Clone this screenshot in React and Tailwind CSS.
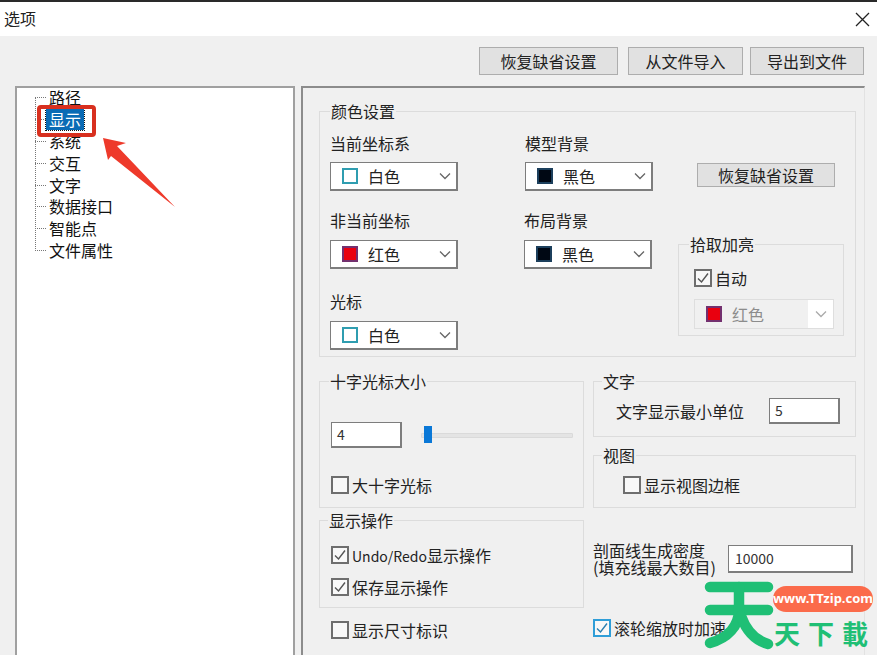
const FONT = '[font-family:"Noto_Sans_CJK_SC","Noto_Sans",sans-serif]';

function Btn({ children, className = "" }) {
  return (
    <button className={`flex items-center justify-center bg-[#e1e1e1] border border-[#adadad] text-[16px] text-[#222] ${className}`}>
      {children}
    </button>
  );
}

function Chevron({ color = "#666" }) {
  return (
    <svg width="12" height="8" viewBox="0 0 12 8" className="shrink-0">
      <path d="M1 1.5 L6 6.5 L11 1.5" fill="none" stroke={color} strokeWidth="1.3" />
    </svg>
  );
}

function Swatch({ kind }) {
  const cls =
    kind === "white"
      ? "bg-white border-[#2f9db0]"
      : kind === "black"
      ? "bg-[#000814] border-[#1c3f5c]"
      : "bg-[#e9000f] border-[#73306f]";
  return <span className={`block w-[16px] h-[16px] border-2 shrink-0 ${cls}`} />;
}

function Select({ kind, label }) {
  return (
    <div className="flex items-center w-[128px] h-[29px] bg-white border border-[#7d7d7d] border-b-2 border-r-2 pl-[11px] pr-[5px]">
      <Swatch kind={kind} />
      <span className="ml-[10px] flex-1 text-[16px] leading-[24px] text-[#222]">{label}</span>
      <Chevron />
    </div>
  );
}

function Group({ title, legendClass = "ml-[10px]", className = "", children }) {
  return (
    <fieldset className={`border border-[#dcdcdc] ${className}`}>
      <legend className={`px-[1px] text-[16px] leading-[24px] text-[#222] ${legendClass}`}>{title}</legend>
      {children}
    </fieldset>
  );
}

function Check({ checked, label, blue, className = "", textClass = "" }) {
  return (
    <label className={`flex items-center h-[18px] ${className}`}>
      <span
        className={`flex items-center justify-center w-[18px] h-[18px] shrink-0 border-2 bg-[#f8f8f8] ${
          blue ? "border-[#2f9ed8]" : "border-[#6e6e6e]"
        }`}
      >
        {checked && (
          <svg width="14" height="14" viewBox="0 0 14 14">
            <path d="M2 7.5 L5.5 11 L12 2.5" fill="none" stroke={blue ? "#2a7fb0" : "#555"} strokeWidth="1.4" />
          </svg>
        )}
      </span>
      <span className={`ml-[3px] whitespace-nowrap text-[16px] leading-[24px] text-[#222] ${textClass}`}>{label}</span>
    </label>
  );
}

function Field({ value, className = "" }) {
  return (
    <div className={`flex items-center bg-white border border-[#7d7d7d] border-b-2 border-r-2 pl-[5px] text-[14px] text-[#333] ${className}`}>
      {value}
    </div>
  );
}

const treeItems = ["路径", "显示", "系统", "交互", "文字", "数据接口", "智能点", "文件属性"];

function Tree() {
  return (
    <div className="relative w-[280px] shrink-0 h-[600px] bg-white border-2 border-b-0 border-[#a0a0a0]">
      <div className="relative -mt-[1px] pl-[18px]">
        <span className="absolute left-[18px] top-[11px] h-[153px] border-l border-dotted border-[#777]" />
        {treeItems.map((t, i) => (
          <div key={t} className="flex items-center h-[21.8px]">
            <span className="w-[11px] border-t border-dotted border-[#777] shrink-0" />
            <span
              className={`px-[3px] text-[16px] leading-[21px] ${
                i === 1 ? "bg-[#0a6bb5] text-white outline-1 outline-dotted outline-[#111]" : "text-[#111]"
              }`}
            >
              {t}
            </span>
          </div>
        ))}
      </div>
      {/* annotation: red highlight and arrow */}
      <span className="absolute left-[20px] top-[17px] w-[59px] h-[32px] border-[4px] border-[#d8301f] rounded-[4px]" />
      <svg className="absolute left-[70px] top-[40px]" width="120" height="90" viewBox="0 0 120 90">
        <polygon points="16,10 39,15 30,18 88,79 24,28 21,32" fill="#ee3a2b" />
      </svg>
    </div>
  );
}

function Logo() {
  return (
    <div className="absolute left-[700px] top-[580px] w-[177px] h-[75px]">
      <svg className="absolute left-0 top-0" width="80" height="75" viewBox="0 0 80 75">
        <g fill="none" stroke="#1fbf75" strokeWidth="10.5" strokeLinecap="round" strokeLinejoin="round">
          <path d="M10 7 H68" />
          <path d="M10 30 H68" />
          <path d="M39 7 V30 C39 46 28 58 10 63" />
          <path d="M41 36 C46 50 54 60 68 64" />
        </g>
      </svg>
      <div className="absolute left-[73px] top-[6px] w-[100px] h-[26px] rounded-full bg-[#fb6b4b] flex items-center justify-center text-white text-[13px] font-bold font-['Noto_Sans',sans-serif] whitespace-nowrap">
        www.TTzip.com
      </div>
      <div className="absolute left-[74px] top-[36px] whitespace-nowrap text-[#1fbf75] text-[26px] leading-[34px] font-bold tracking-[8px]">
        天下載
      </div>
    </div>
  );
}

const LABEL = "text-[16px] leading-[24px] text-[#222]";

export default function App() {
  return (
    <div className={`relative w-[877px] h-[655px] overflow-hidden flex flex-col bg-[#f0f0f0] ${FONT}`}>
      <header className="flex items-center justify-between h-[36px] shrink-0 bg-white border-t-2 border-[#2a2a2a] pl-[4px] pr-[7px]">
        <span className="text-[16px] text-[#222] -mt-[2px]">选项</span>
        <svg width="15" height="15" viewBox="0 0 15 15">
          <path d="M1 1 L14 14 M14 1 L1 14" stroke="#222" strokeWidth="1.3" />
        </svg>
      </header>

      <div className="flex justify-end pt-[11px] pr-[13px] shrink-0">
        <Btn className="w-[139px] h-[28px]">恢复缺省设置</Btn>
        <Btn className="w-[115px] h-[28px] ml-[10px]">从文件导入</Btn>
        <Btn className="w-[114px] h-[28px] ml-[7px]">导出到文件</Btn>
      </div>

      <div className="flex mt-[11px] pl-[15px]">
        <Tree />
        <main className="ml-[6px] w-[564px] h-[600px] border-l-2 border-t-2 border-r border-[#8c8c8c] border-r-[#e2e2e2] pl-[16px] pr-[8px] pt-[11px]">
          <Group title="颜色设置" className="h-[258px]">
            <div className="flex pl-[10px]">
              <div className="w-[128px]">
                <div className={`mt-[8px] mb-[7px] ${LABEL}`}>当前坐标系</div>
                <Select kind="white" label="白色" />
                <div className={`mt-[17px] mb-[8px] ${LABEL}`}>非当前坐标</div>
                <Select kind="red" label="红色" />
                <div className={`mt-[20px] mb-[8px] ${LABEL}`}>光标</div>
                <Select kind="white" label="白色" />
              </div>
              <div className="ml-[66px] w-[129px]">
                <div className={`ml-[1px] mt-[8px] mb-[7px] ${LABEL}`}>模型背景</div>
                <div className="ml-[1px]">
                  <Select kind="black" label="黑色" />
                </div>
                <div className={`mt-[17px] mb-[8px] ${LABEL}`}>布局背景</div>
                <Select kind="black" label="黑色" />
              </div>
              <div className="ml-[25px] w-[166px]">
                <Btn className="ml-[19px] mt-[40px] w-[138px] h-[24px]">恢复缺省设置</Btn>
                <Group title="拾取加亮" className="mt-[45px] h-[104px]">
                  <Check checked label="自动" className="ml-[15px] mt-[13px]" />
                  <div className="ml-[15px] mt-[12px] flex items-center w-[140px] h-[30px] bg-[#f0f0f0] border border-[#dedede]">
                    <div className="flex items-center flex-1 h-full pl-[11px]">
                      <Swatch kind="red" />
                      <span className="ml-[10px] text-[16px] text-[#8c8c8c]">红色</span>
                    </div>
                    <div className="flex items-center justify-center w-[25px] h-full bg-white">
                      <Chevron color="#aaa" />
                    </div>
                  </div>
                </Group>
              </div>
            </div>
          </Group>

          <div className="grid grid-cols-[265px_263px] gap-x-[9px] mt-[12px]">
            <div className="flex flex-col">
              <Group title="十字光标大小" legendClass="ml-[9px]" className="h-[139px]">
                <div className="flex items-center pl-[11px] mt-[29px]">
                  <Field value="4" className="w-[71px] h-[26px]" />
                  <div className="relative ml-[19px] w-[152px] h-[5px] bg-[#e4e4e4] border border-[#dadada] rounded-[1px]">
                    <span className="absolute left-[2px] -top-[8px] w-[8px] h-[17px] bg-[#0a78d7]" />
                  </div>
                </div>
                <Check label="大十字光标" className="ml-[11px] mt-[28px]" />
              </Group>
              <Group title="显示操作" legendClass="ml-[8px]" className="h-[100px]">
                <Check
                  checked
                  label={
                    <>
                      <span className="text-[14px]">Undo/Redo</span>显示操作
                    </>
                  }
                  className="ml-[11px] mt-[14px]"
                />
                <Check checked label="保存显示操作" className="ml-[11px] mt-[14px]" />
              </Group>
              <Check label="显示尺寸标识" className="ml-[12px] mt-[13px]" />
            </div>

            <div className="flex flex-col">
              <Group title="文字" legendClass="ml-[8px]" className="h-[68px]">
                <div className="flex items-center pl-[22px] mt-[5px]">
                  <span className="w-[153px] text-[16px] text-[#222]">文字显示最小单位</span>
                  <Field value="5" className="w-[71px] h-[26px]" />
                </div>
              </Group>
              <Group title="视图" legendClass="ml-[8px]" className="mt-[6px] h-[65px]">
                <Check label="显示视图边框" className="ml-[29px] mt-[9px]" />
              </Group>
              <div className="flex items-center mt-[34px]">
                <div className="w-[135px] text-[16px] leading-[17px] text-[#222] whitespace-nowrap">
                  剖面线生成密度
                  <br />
                  (填充线最大数目)
                </div>
                <Field value="10000" className="w-[125px] h-[28px] pl-[6px]" />
              </div>
              <Check checked blue label="滚轮缩放时加速" className="mt-[43px]" />
            </div>
          </div>
        </main>
      </div>

      <Logo />
    </div>
  );
}
